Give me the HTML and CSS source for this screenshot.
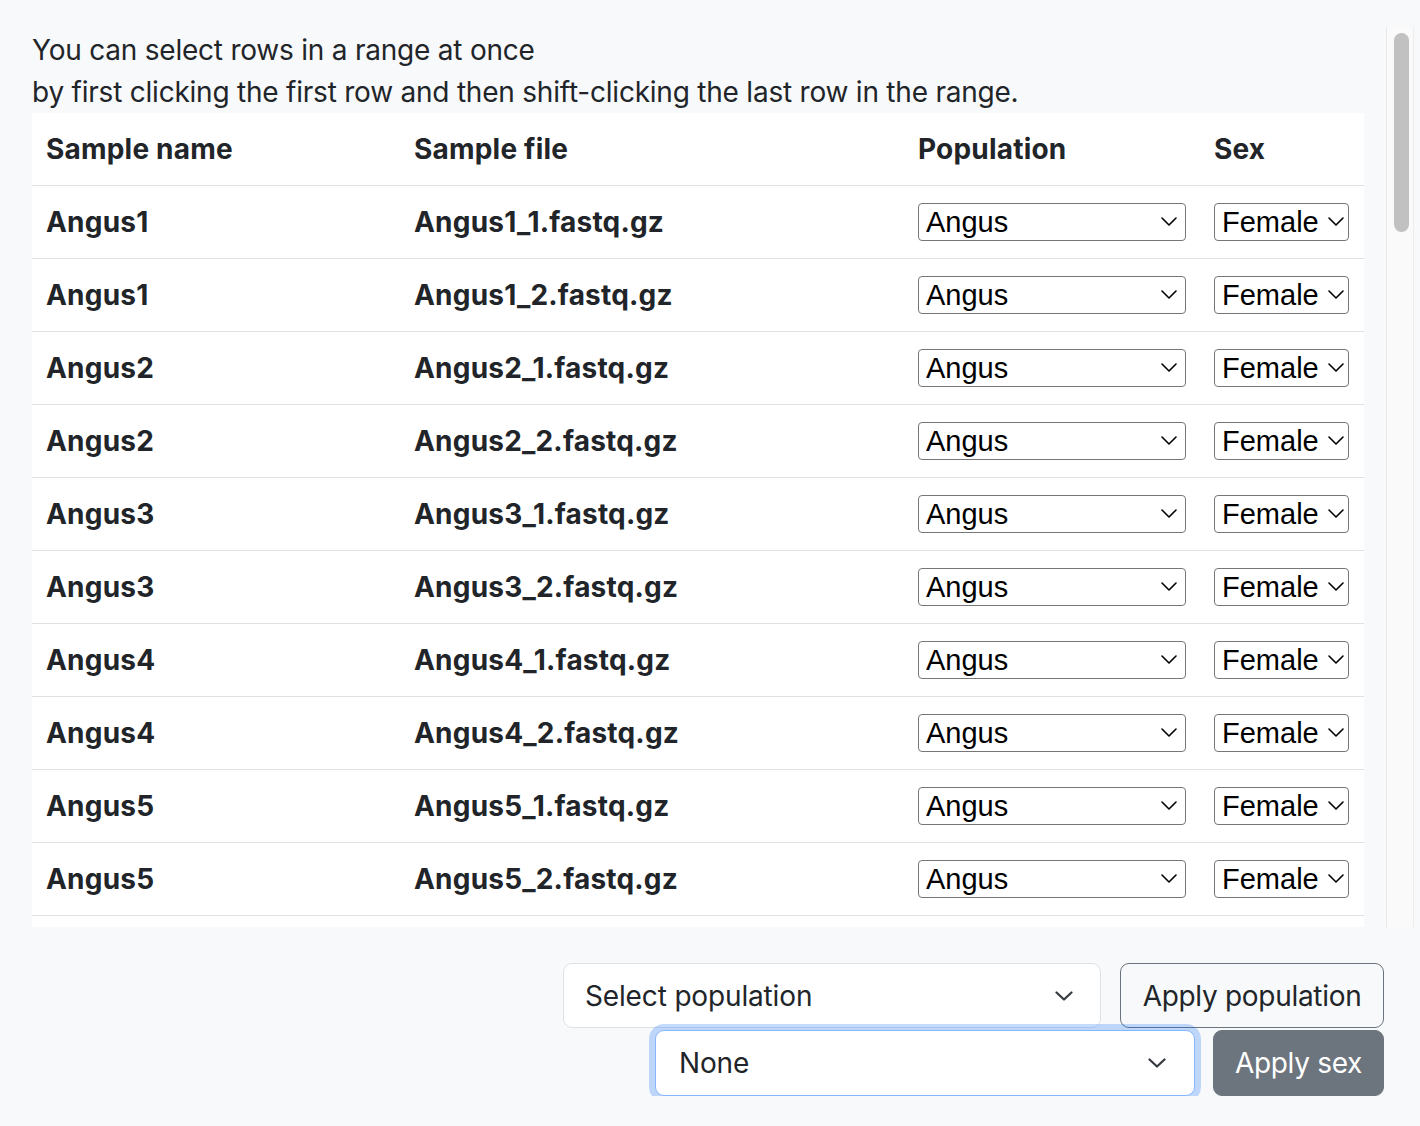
FILE: index.html
```html
<!DOCTYPE html>
<html lang="en">
<head>
<meta charset="utf-8">
<title>Samples</title>
<link rel="stylesheet" href="styles.css">
</head>
<body>
<div class="scroll-wrap">
  <div class="scroll">
    <p class="hint">You can select rows in a range at once<br>by first clicking the first row and then shift-clicking the last row in the range.</p>
    <div class="table-wrap">
      <table class="samples">
        <colgroup><col class="c1"><col class="c2"><col class="c3"><col class="c4"></colgroup>
        <thead>
          <tr><th>Sample name</th><th>Sample file</th><th>Population</th><th>Sex</th></tr>
        </thead>
        <tbody>
          <tr><td>Angus1</td><td>Angus1_1.fastq.gz</td><td><select class="pop"><option>Angus</option></select></td><td><select class="sex"><option>Female</option></select></td></tr>
          <tr><td>Angus1</td><td>Angus1_2.fastq.gz</td><td><select class="pop"><option>Angus</option></select></td><td><select class="sex"><option>Female</option></select></td></tr>
          <tr><td>Angus2</td><td>Angus2_1.fastq.gz</td><td><select class="pop"><option>Angus</option></select></td><td><select class="sex"><option>Female</option></select></td></tr>
          <tr><td>Angus2</td><td>Angus2_2.fastq.gz</td><td><select class="pop"><option>Angus</option></select></td><td><select class="sex"><option>Female</option></select></td></tr>
          <tr><td>Angus3</td><td>Angus3_1.fastq.gz</td><td><select class="pop"><option>Angus</option></select></td><td><select class="sex"><option>Female</option></select></td></tr>
          <tr><td>Angus3</td><td>Angus3_2.fastq.gz</td><td><select class="pop"><option>Angus</option></select></td><td><select class="sex"><option>Female</option></select></td></tr>
          <tr><td>Angus4</td><td>Angus4_1.fastq.gz</td><td><select class="pop"><option>Angus</option></select></td><td><select class="sex"><option>Female</option></select></td></tr>
          <tr><td>Angus4</td><td>Angus4_2.fastq.gz</td><td><select class="pop"><option>Angus</option></select></td><td><select class="sex"><option>Female</option></select></td></tr>
          <tr><td>Angus5</td><td>Angus5_1.fastq.gz</td><td><select class="pop"><option>Angus</option></select></td><td><select class="sex"><option>Female</option></select></td></tr>
          <tr><td>Angus5</td><td>Angus5_2.fastq.gz</td><td><select class="pop"><option>Angus</option></select></td><td><select class="sex"><option>Female</option></select></td></tr>
        </tbody>
      </table>
    </div>
  </div>
  <div class="scrollbar" aria-hidden="true"><div class="thumb"></div></div>
</div>
<div class="actions">
  <div class="action-row">
    <select class="form-select sel-pop"><option>Select population</option></select>
    <button class="btn btn-outline">Apply population</button>
  </div>
  <div class="action-row">
    <select class="form-select sel-sex focused"><option>None</option></select>
    <button class="btn btn-gray">Apply sex</button>
  </div>
</div>
</body>
</html>
```
FILE: styles.css
```css
html, body {
  margin: 0;
  padding: 0;
  background: #f8f9fa;
  color: #212529;
  font-family: Inter, "Noto Sans", sans-serif;
  font-size: 28px;
  line-height: 1.5;
}

.scroll-wrap {
  display: flex;
  margin: 27px 6px 0 32px;
  height: 900px;
}

.scroll {
  flex: 1;
  min-width: 0;
  overflow: hidden;
  padding-right: 22px;
  display: flex;
  flex-direction: column;
}

.scrollbar {
  width: 28px;
  flex: none;
  background: #fafafa;
  border-left: 1px solid #e8e8e8;
  border-right: 1px solid #ededed;
  padding: 6px 4px 0 7px;
  box-sizing: border-box;
}
.thumb {
  height: 199px;
  background: #c1c1c1;
  border-radius: 8px;
}

.hint {
  margin: 0;
  padding-top: 2px;
  line-height: 42px;
  height: 84px;
  flex: none;
  letter-spacing: -0.22px;
  white-space: nowrap;
}

.table-wrap {
  flex: 1;
  background: #fff;
}

.samples {
  width: 100%;
  border-collapse: collapse;
  background: #fff;
  table-layout: fixed;
}
.c1 { width: 368px; }
.c2 { width: 504px; }
.c3 { width: 296px; }
.c4 { width: 164px; }

.samples th,
.samples td {
  padding: 0 14px;
  text-align: left;
  vertical-align: middle;
  font-weight: 700;
  letter-spacing: 0.2px;
  border-bottom: 1px solid #dee2e6;
  white-space: nowrap;
  box-sizing: border-box;
}
.samples th { height: 72px; }
.samples td { height: 73px; }

.pop,
.sex {
  appearance: none;
  -webkit-appearance: none;
  display: block;
  height: 38px;
  margin: 0;
  box-sizing: border-box;
  border: 1px solid #767676;
  border-radius: 4px;
  background-color: #fff;
  color: #000;
  font-family: "Liberation Sans", Arial, sans-serif;
  font-size: 29px;
  line-height: 36px;
  letter-spacing: 0;
  padding: 0 0 0 7px;
  background-image: url("data:image/svg+xml,%3csvg xmlns='http://www.w3.org/2000/svg' width='16' height='9' viewBox='0 0 16 9'%3e%3cpath d='M1 1l7 7 7-7' fill='none' stroke='%23000' stroke-width='1.6' stroke-linecap='round' stroke-linejoin='round'/%3e%3c/svg%3e");
  background-repeat: no-repeat;
  background-size: 16px 9px;
}
.pop {
  width: 268px;
  background-position: right 8px center;
}
.sex {
  width: 135px;
  padding-left: 7px;
  background-position: right 4px center;
}

.actions {
  display: flex;
  flex-direction: column;
  align-items: flex-end;
  gap: 2px;
  padding: 36px 36px 0 0;
}
.action-row {
  display: flex;
  align-items: center;
}

.form-select {
  appearance: none;
  -webkit-appearance: none;
  box-sizing: border-box;
  height: 65px;
  background-color: #fff;
  border: 1px solid #dee2e6;
  border-radius: 9px;
  color: #212529;
  font-family: Inter, "Noto Sans", sans-serif;
  font-size: 28px;
  letter-spacing: -0.15px;
  padding: 0 60px 0 21px;
  margin: 0;
  background-image: url("data:image/svg+xml,%3csvg xmlns='http://www.w3.org/2000/svg' width='18' height='10' viewBox='0 0 18 10'%3e%3cpath d='M1.5 1.5l7.5 7 7.5-7' fill='none' stroke='%23343a40' stroke-width='2.2' stroke-linecap='round' stroke-linejoin='round'/%3e%3c/svg%3e");
  background-repeat: no-repeat;
  background-position: right 27px center;
  background-size: 18px 10px;
}
.sel-pop {
  width: 538px;
  margin-right: 19px;
}
.sel-sex {
  width: 540px;
  height: 66px;
  margin-right: 18px;
  padding-left: 23px;
  background-position: right 28px center;
}
.focused {
  border-color: #86b7fe;
  box-shadow: 0 0 0 6px rgba(13, 110, 253, 0.25);
}

.btn {
  box-sizing: border-box;
  height: 65px;
  border-radius: 9px;
  font-family: Inter, "Noto Sans", sans-serif;
  font-size: 28px;
  letter-spacing: -0.3px;
  padding: 0;
  margin: 0;
  white-space: nowrap;
  text-align: center;
  cursor: pointer;
}
.btn-outline {
  background: transparent;
  border: 1px solid #6c757d;
  color: #212529;
  width: 264px;
}
.btn-gray {
  height: 66px;
  background: #6c757d;
  border: 1px solid #6c757d;
  color: #fff;
  width: 171px;
}
```
